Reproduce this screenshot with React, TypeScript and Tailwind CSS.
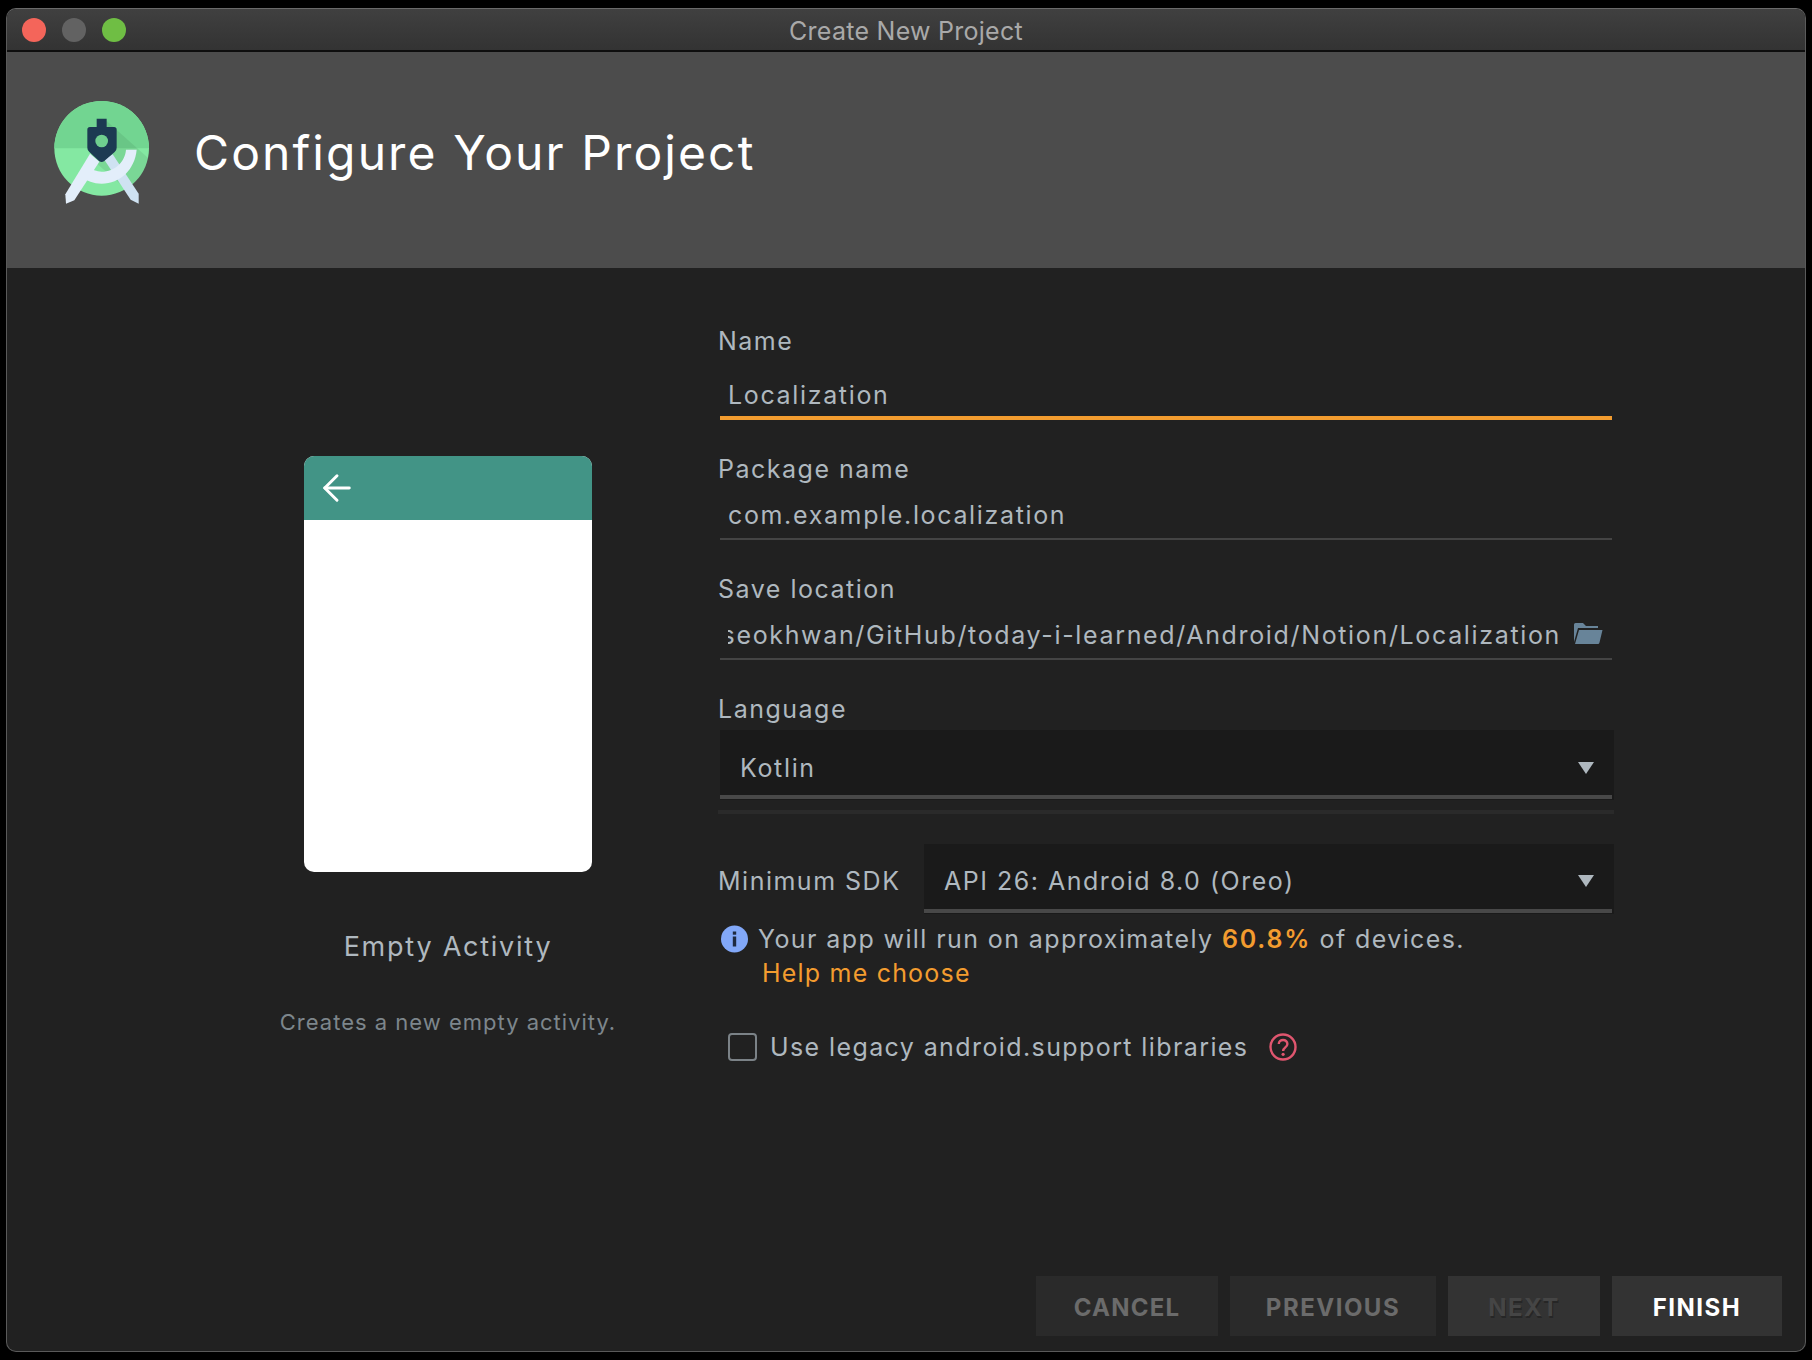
import { ArrowLeft } from 'lucide-react'

const font = 'font-["Inter","Liberation_Sans",sans-serif]'

function AndroidStudioLogo() {
  return (
    <svg width="130" height="125" viewBox="0 0 390 375" className="shrink-0">
      <defs>
        <clipPath id="logo-circle">
          <circle cx="185" cy="172" r="142" />
        </clipPath>
      </defs>
      <circle cx="185" cy="172" r="142" fill="#84e8a2" />
      <path d="M43 172 A142 142 0 0 1 327 172 Z" fill="#72d591" />
      <path d="M200 90 L340 215 L300 330 L150 200 Z" fill="#000" opacity="0.07" clipPath="url(#logo-circle)" />
      <path d="M218 190 L296 308 L296 338 L272 326 L192 205 Z" fill="#cfe2f2" />
      <path d="M258 176 L290 176 C285 235 240 278 185 278 C160 278 140 270 125 258 L143 225 C155 236 170 242 185 242 C225 242 255 212 258 176 Z" fill="#e3eefa" />
      <path d="M150 188 L178 212 L103 328 L78 338 L76 310 Z" fill="#e3eefa" />
      <path d="M142 116 Q142 108 150 108 L170 108 L170 83 L200 83 L200 108 L222 108 Q230 108 230 116 L230 170 Q230 178 224 183 L192 211 Q185 215 178 211 L148 183 Q142 178 142 170 Z" fill="#1c3a52" />
      <circle cx="185" cy="150" r="19" fill="#6fcf8f" />
    </svg>
  )
}

function FolderIcon() {
  return (
    <svg width="30" height="22" viewBox="0 0 30 22" className="shrink-0">
      <path d="M1 20 V2.5 Q1 1 2.5 1 H10 L13 4 H25 V6 H5 Z" fill="#688499" />
      <path d="M6 8 H29.5 L26.5 20.5 Q26.2 22 25 22 H2 Z" fill="#688499" />
    </svg>
  )
}

function Caret() {
  return <div className="h-0 w-0 border-x-[8px] border-t-[12px] border-x-transparent border-t-[#afb8bf]" />
}

function Select({ label, className }: { label: string; className: string }) {
  return (
    <div className={`relative flex h-[70px] items-center justify-between bg-[#1a1a1a] pr-[20px] ${className}`}>
      <span className="text-[#afb8bf]">{label}</span>
      <Caret />
      <div className="absolute bottom-[1px] left-0 right-[2px] h-[4px] bg-[#484848]" />
    </div>
  )
}

export default function App() {
  return (
    <div className={`min-h-[1360px] bg-black pl-[6px] pt-[8px] ${font}`}>
      <div className="flex h-[1344px] w-[1800px] flex-col overflow-hidden rounded-[10px] border border-[#5a5a5a] border-t-[#6a6a6a] bg-[#212121]">
        {/* Title bar */}
        <div className="relative flex h-[43px] shrink-0 items-center justify-center border-b-2 border-[#0e0e0e] bg-gradient-to-b from-[#404040] to-[#333333] pt-[4px]">
          <div className="absolute left-[15px] top-[9px] flex gap-[16px]">
            <div className="h-[24px] w-[24px] rounded-full bg-[#f4655a]" />
            <div className="h-[24px] w-[24px] rounded-full bg-[#626262]" />
            <div className="h-[24px] w-[24px] rounded-full bg-[#6fbe44]" />
          </div>
          <span className="text-[25px] tracking-[0.26px] text-[#a9a9a9]">Create New Project</span>
        </div>

        {/* Header */}
        <div className="flex h-[216px] shrink-0 items-center bg-[#4c4c4c] pb-[13px] pl-[33px]">
          <AndroidStudioLogo />
          <h1 className="mb-[2px] ml-[24px] text-[48px] tracking-[2.1px] text-white">Configure Your Project</h1>
        </div>

        {/* Body */}
        <div className="flex text-[25px] leading-[30px] tracking-[1.5px] text-[#afb8bf]">
          <div className="ml-[231px] flex w-[420px] flex-col items-center pt-[188px]">
            <div className="h-[416px] w-[288px] overflow-hidden rounded-[10px] bg-white">
              <div className="flex h-[64px] items-center bg-[#429486] pl-[12px] text-white">
                <ArrowLeft size={42} strokeWidth={1.7} />
              </div>
            </div>
            <div className="mt-[60px] text-[27px] tracking-[1.75px] text-[#afb8bf]">Empty Activity</div>
            <div className="mt-[45px] whitespace-nowrap text-[22px] tracking-[1px] text-[#7d868c]">Creates a new empty activity.</div>
          </div>

          <div className="ml-[60px] flex w-[896px] flex-col pt-[58px]">
            <div>Name</div>
            <div className="ml-[2px] mt-[18px] h-[46px] w-[892px] border-b-4 border-[#f39c2f] pl-[8px] leading-[42px] tracking-[1.65px]">Localization</div>

            <div className="mt-[34px]">Package name</div>
            <div className="ml-[2px] mt-[10px] h-[46px] w-[892px] border-b-2 border-[#444444] pl-[8px] leading-[43px] tracking-[1.65px]">com.example.localization</div>

            <div className="mt-[34px]">Save location</div>
            <div className="ml-[2px] mt-[10px] flex h-[46px] w-[892px] items-center border-b-2 border-[#444444] pl-[8px] pr-[9px] tracking-[1.65px]">
              <div className="mb-[2px] flex min-w-0 flex-1 justify-end overflow-hidden whitespace-nowrap leading-[42px]">
                /Users/seokhwan/GitHub/today-i-learned/Android/Notion/Localization
              </div>
              <div className="mb-[6px] ml-[12px] shrink-0"><FolderIcon /></div>
            </div>

            <div className="mt-[34px]">Language</div>
            <Select label="Kotlin" className="ml-[2px] mt-[6px] w-[894px] pl-[20px] pt-[6px] tracking-[1.65px]" />
            <div className="mt-[10px] h-[4px] w-[896px] bg-[#2a2a2a]" />

            <div className="mt-[30px] flex items-center">
              <div className="w-[206px] pt-[4px]">Minimum SDK</div>
              <Select label="API 26: Android 8.0 (Oreo)" className="w-[690px] pl-[20px] pt-[3px]" />
            </div>

            <div className="ml-[3px] mt-[10px] flex items-center">
              <svg width="27" height="28" viewBox="0 0 27 28" className="shrink-0">
                <circle cx="13.5" cy="14" r="13.5" fill="#82a8f8" />
                <rect x="11.8" y="11.5" width="3.4" height="10" fill="#1e2a40" />
                <rect x="11.8" y="6.5" width="3.4" height="3.2" fill="#1e2a40" />
              </svg>
              <span className="ml-[10px] whitespace-nowrap tracking-[1.4px]">
                Your app will run on approximately <b className="font-semibold tracking-[1.8px] text-[#f39c2f]">60.8%</b> of devices.
              </span>
            </div>
            <div className="ml-[44px] mt-[4px] tracking-[1.2px] text-[#f39c2f]">Help me choose</div>

            <div className="ml-[10px] mt-[44px] flex items-center">
              <div className="h-[28px] w-[29px] rounded-[4px] border-2 border-[#7b8287]" />
              <span className="ml-[13px] whitespace-nowrap tracking-[1.4px]">Use legacy android.support libraries</span>
              <svg width="28" height="28" viewBox="0 0 28 28" className="ml-[21px] shrink-0" fill="none">
                <circle cx="14" cy="14" r="12.5" stroke="#e0566f" strokeWidth="2.4" />
                <path d="M9.8 11 C9.8 5.6 18.4 5.6 18.4 11 C18.4 14.4 14.1 14.3 14.1 18" stroke="#e0566f" strokeWidth="2.4" />
                <circle cx="14.1" cy="21.3" r="1.6" fill="#e0566f" />
              </svg>
            </div>
          </div>
        </div>

        {/* Footer buttons */}
        <div className="mb-[15px] mr-[23px] mt-auto flex justify-end gap-[12px] text-[24px] font-bold tracking-[1.5px]">
          <div className="flex h-[60px] w-[182px] items-center justify-center bg-[#2a2a2a] pt-[3px] tracking-[1.2px] text-[#6b6b6b]">CANCEL</div>
          <div className="flex h-[60px] w-[206px] items-center justify-center bg-[#2a2a2a] pt-[3px] text-[#6b6b6b]">PREVIOUS</div>
          <div className="flex h-[60px] w-[152px] items-center justify-center bg-[#333333] pt-[3px] text-[#454545] [text-shadow:1px_2px_0_#262626]">NEXT</div>
          <div className="flex h-[60px] w-[170px] items-center justify-center bg-[#333333] pt-[3px] text-white">FINISH</div>
        </div>
      </div>
    </div>
  )
}
